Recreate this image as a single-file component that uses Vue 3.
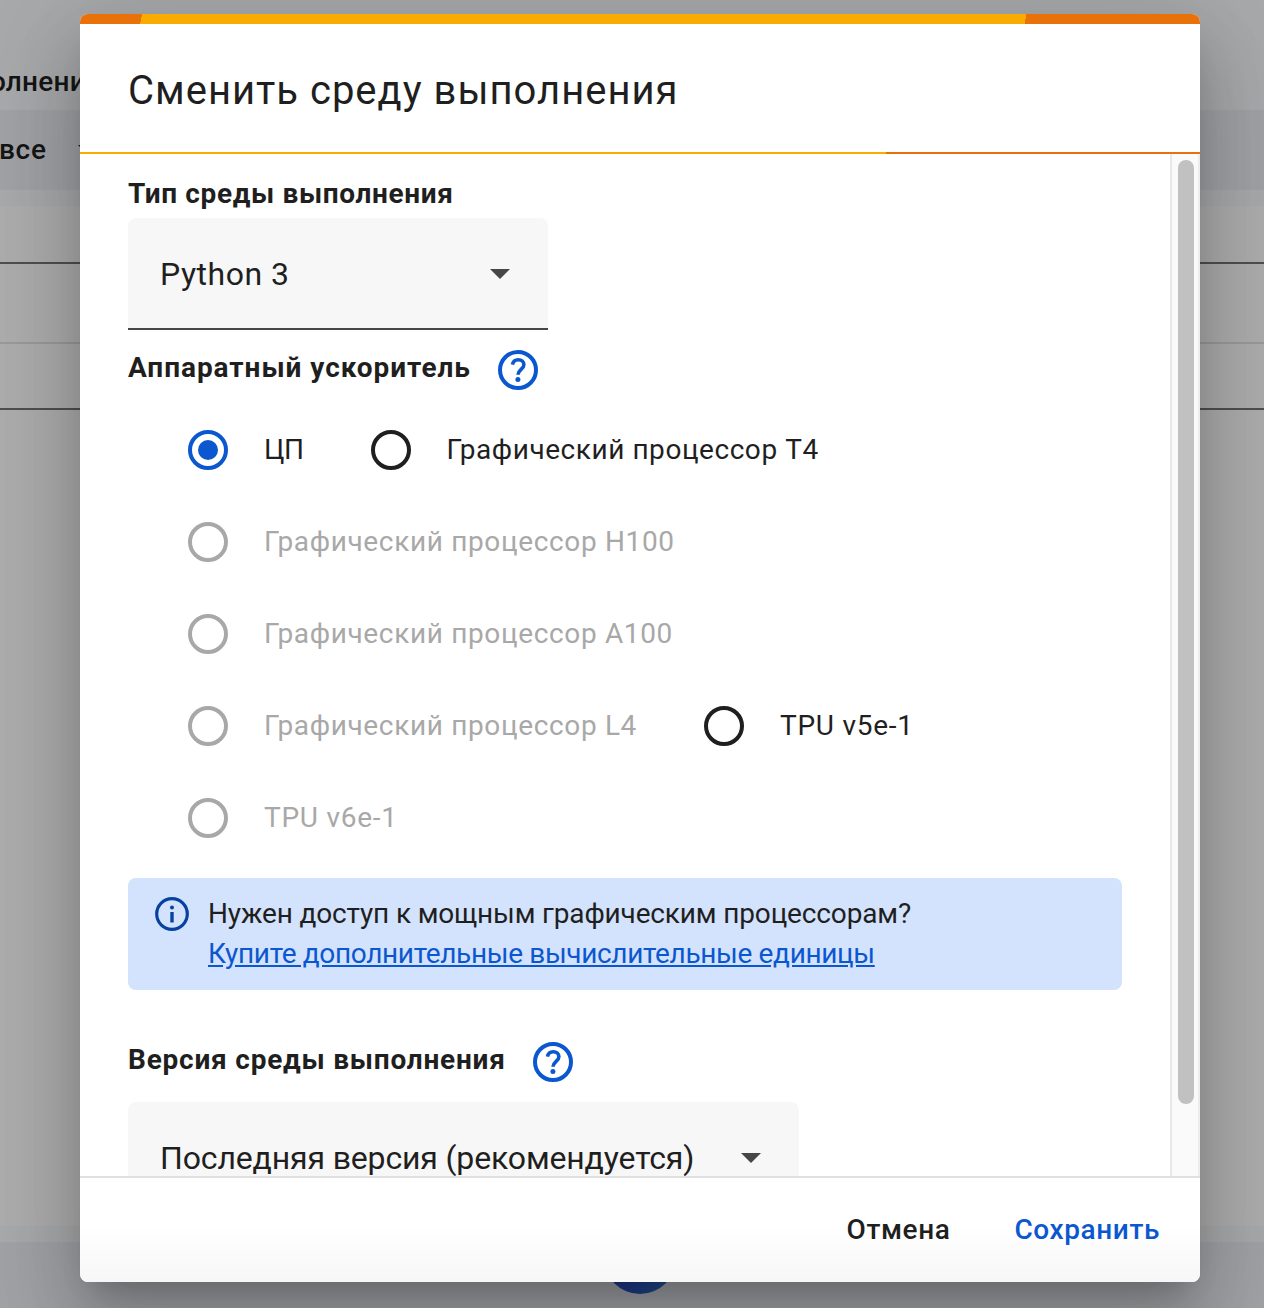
<!-- Change runtime type dialog -->
<template>
  <div class="screen">
    <!-- Notebook page under the scrim -->
    <div class="page">
      <div class="page-menu">
        <span class="page-text menu-text">олнение</span>
      </div>
      <div class="page-toolbar">
        <span class="page-text all-text">все</span>
        <svg class="page-caret" width="20" height="10" viewBox="0 0 20 10">
          <path d="M0 0h20L10 10z" fill="currentColor" />
        </svg>
      </div>
      <div class="page-gap"></div>
      <div class="page-cells">
        <div class="cell-space"></div>
        <div class="cell">
          <div class="cell-row first"></div>
          <div class="cell-row"></div>
        </div>
      </div>
      <div class="page-gap"></div>
      <div class="page-status"></div>
      <div class="page-fab"></div>
    </div>
    <div class="scrim"></div>

    <div class="dialog" role="dialog">
      <div class="progress-top"></div>
      <header class="dialog-header">
        <h2 class="dialog-title">Сменить среду выполнения</h2>
      </header>
      <div class="header-line"></div>

      <div class="dialog-body">
        <div class="body-content">
          <h3 class="label runtime-label">Тип среды выполнения</h3>
          <div class="select">
            <span class="select-python">Python 3</span>
            <svg class="select-arrow" width="20" height="10" viewBox="0 0 20 10">
              <path d="M0 0h20L10 10z" fill="currentColor" />
            </svg>
          </div>

          <div class="label-row hardware-row">
            <h3 class="label hardware-label">Аппаратный ускоритель</h3>
            <svg class="help-icon" viewBox="0 0 40 40">
              <circle cx="20" cy="20" r="18" fill="none" stroke="currentColor" stroke-width="4" />
              <path d="M14.4 14.6C15.1 11.5 17.2 9.7 20.2 9.7c3.3 0 5.7 2.1 5.7 5.1 0 4.3-5.9 5-5.9 10" fill="none" stroke="currentColor" stroke-width="3.6" />
              <circle cx="19.9" cy="29.5" r="2.5" fill="currentColor" />
            </svg>
          </div>

          <div class="options">
            <div v-for="(row, i) in rows" :key="i" class="option-row">
              <div
                v-for="item in row"
                :key="item.label"
                class="option"
                :class="{ checked: item.value === selected, disabled: item.disabled }"
                @click="select(item)"
              >
                <span class="radio"></span>
                <span class="option-text" :class="'text-' + item.value">{{ item.label }}</span>
              </div>
            </div>
          </div>

          <div class="notice">
            <svg class="info-icon" viewBox="0 0 34 34">
              <circle cx="17" cy="17" r="15.3" fill="none" stroke="currentColor" stroke-width="3.2" />
              <circle cx="17" cy="10.4" r="2" fill="currentColor" />
              <path d="M17 15v10.5" stroke="currentColor" stroke-width="3.4" />
            </svg>
            <div class="notice-text">
              <span class="notice-question">Нужен доступ к мощным графическим процессорам?</span><br />
              <a class="notice-link">Купите дополнительные вычислительные единицы</a>
            </div>
          </div>

          <div class="label-row version-row">
            <h3 class="label version-label">Версия среды выполнения</h3>
            <svg class="help-icon" viewBox="0 0 40 40">
              <circle cx="20" cy="20" r="18" fill="none" stroke="currentColor" stroke-width="4" />
              <path d="M14.4 14.6C15.1 11.5 17.2 9.7 20.2 9.7c3.3 0 5.7 2.1 5.7 5.1 0 4.3-5.9 5-5.9 10" fill="none" stroke="currentColor" stroke-width="3.6" />
              <circle cx="19.9" cy="29.5" r="2.5" fill="currentColor" />
            </svg>
          </div>
          <div class="select wide">
            <span class="select-version">Последняя версия (рекомендуется)</span>
            <svg class="select-arrow" width="20" height="10" viewBox="0 0 20 10">
              <path d="M0 0h20L10 10z" fill="currentColor" />
            </svg>
          </div>
        </div>
        <div class="scroll-track">
          <div class="scroll-thumb"></div>
        </div>
      </div>

      <footer class="dialog-footer">
        <button class="btn cancel">Отмена</button>
        <button class="btn save">Сохранить</button>
      </footer>
    </div>
  </div>
</template>

<script setup>
import { ref } from 'vue'

const selected = ref('cpu')

const rows = [
  [
    { value: 'cpu', label: 'ЦП' },
    { value: 't4', label: 'Графический процессор T4' }
  ],
  [{ value: 'h100', label: 'Графический процессор H100', disabled: true }],
  [{ value: 'a100', label: 'Графический процессор A100', disabled: true }],
  [
    { value: 'l4', label: 'Графический процессор L4', disabled: true },
    { value: 'v5e', label: 'TPU v5e-1' }
  ],
  [{ value: 'v6e', label: 'TPU v6e-1', disabled: true }]
]

const select = (item) => {
  if (!item.disabled) selected.value = item.value
}
</script>

<style>
body {
  overflow: hidden;
}
</style>

<style scoped>
.screen {
  position: relative;
  width: 1264px;
  height: 1308px;
  overflow: hidden;
  font-family: Roboto, "Noto Sans", sans-serif;
  font-size: 28px;
  color: #1f1f1f;
  white-space: nowrap;
}

/* Notebook page */
.page {
  display: flex;
  flex-direction: column;
  height: 100%;
}

.page-menu {
  height: 110px;
  flex: none;
  box-sizing: border-box;
  padding-top: 62px;
  background: #f8f9fb;
}

.page-text {
  font-weight: 500;
  line-height: 40px;
  letter-spacing: 0.2px;
}

.menu-text {
  display: block;
  margin-left: -10px;
}

.all-text {
  margin-left: -1px;
  letter-spacing: 0.7px;
}

.page-toolbar {
  display: flex;
  align-items: center;
  gap: 31px;
  height: 80px;
  flex: none;
  background: #edeff5;
}

.page-gap {
  height: 16px;
  flex: none;
  background: #f8f9fc;
}

.page-cells {
  flex: 1;
  background: #fff;
}

.cell-space {
  height: 56px;
}

.cell {
  border-top: 2px solid #747775;
  border-bottom: 2px solid #747775;
}

.cell-row {
  height: 64px;
}

.cell-row.first {
  height: 78px;
  border-bottom: 2px solid #e3e3e3;
}

.page-status {
  height: 66px;
  flex: none;
  background: #edeff5;
}

.page-fab {
  position: absolute;
  left: 604px;
  top: 1222px;
  width: 72px;
  height: 72px;
  border-radius: 50%;
  background: linear-gradient(90deg, #2f55cf 35%, #2f80d0);
}

.scrim {
  position: absolute;
  inset: 0;
  background: rgba(0, 0, 0, 0.32);
}

/* Dialog */
.dialog {
  position: absolute;
  left: 80px;
  top: 14px;
  width: 1120px;
  height: 1268px;
  display: flex;
  flex-direction: column;
  overflow: hidden;
  border-radius: 8px;
  background: #fff;
  box-shadow:
    0 22px 30px -14px rgba(0, 0, 0, 0.2),
    0 48px 76px 6px rgba(0, 0, 0, 0.14),
    0 18px 92px 16px rgba(0, 0, 0, 0.12);
}

.progress-top {
  height: 10px;
  flex: none;
  background: linear-gradient(100deg, #e8710a 61px, #f9ab00 61px, #f9ab00 932px, #e8710a 932px);
}

.dialog-header {
  display: flex;
  align-items: center;
  height: 128px;
  padding: 4px 48px 0;
  box-sizing: border-box;
  flex: none;
}

.dialog-title {
  margin: 0;
  font-size: 40px;
  font-weight: 450;
  letter-spacing: 1px;
}

.header-line {
  height: 2px;
  flex: none;
  background: linear-gradient(90deg, #f9ab00 806px, #e8710a 806px);
}

.dialog-body {
  display: flex;
  height: 1022px;
  flex: none;
  overflow: hidden;
}

.body-content {
  flex: 1;
  padding: 20px 48px 0;
}

.label {
  margin: 0;
  font-size: 28px;
  font-weight: 700;
  line-height: 40px;
}

.runtime-label {
  letter-spacing: 0.65px;
}

.select {
  display: flex;
  align-items: center;
  justify-content: space-between;
  box-sizing: border-box;
  width: 420px;
  height: 112px;
  margin-top: 4px;
  padding: 2px 38px 0 32px;
  border-bottom: 2px solid #444746;
  border-radius: 8px 8px 0 0;
  background: #f7f7f7;
  font-size: 32px;
}

.select-python {
  letter-spacing: 0.5px;
}

.select-version {
  letter-spacing: -0.15px;
}

.select-arrow {
  color: #444746;
}

.label-row {
  display: flex;
  align-items: center;
  gap: 27px;
}

.hardware-row {
  height: 40px;
  margin-top: 20px;
}

.hardware-label {
  margin-top: -4px;
  letter-spacing: 0.96px;
}

.help-icon {
  width: 40px;
  height: 40px;
  flex: none;
  color: #0b57d0;
}

.options {
  padding: 14px 0 0 60px;
}

.option-row {
  display: flex;
  align-items: center;
  gap: 68px;
  height: 92px;
}

.option {
  display: flex;
  align-items: center;
  gap: 36px;
}

.radio {
  display: flex;
  align-items: center;
  justify-content: center;
  box-sizing: border-box;
  width: 40px;
  height: 40px;
  border: 4px solid #1f1f1f;
  border-radius: 50%;
}

.option-text {
  margin-top: -2px;
  letter-spacing: 0.65px;
}

.text-cpu {
  letter-spacing: -0.5px;
}

.text-t4 {
  margin-left: -1px;
  letter-spacing: 0.55px;
}

.text-l4 {
  margin-right: -1px;
}

.text-v5e,
.text-v6e {
  letter-spacing: 0.75px;
}

.checked .radio {
  border-color: #0b57d0;
}

.checked .radio::after {
  content: '';
  width: 20px;
  height: 20px;
  border-radius: 50%;
  background: #0b57d0;
}

.disabled {
  color: #a8a8a8;
}

.disabled .radio {
  border-color: #a8a8a8;
}

.notice {
  display: flex;
  align-items: flex-start;
  gap: 19px;
  box-sizing: border-box;
  width: 994px;
  height: 112px;
  margin-top: 14px;
  padding: 16px 27px;
  border-radius: 8px;
  background: #d3e3fd;
}

.info-icon {
  width: 34px;
  height: 34px;
  margin-top: 3px;
  color: #0842a0;
}

.notice-text {
  line-height: 40px;
}

.notice-question {
  letter-spacing: -0.15px;
}

.notice-link {
  color: #0b57d0;
  letter-spacing: -0.34px;
  text-decoration: underline;
}

.version-row {
  height: 40px;
  margin-top: 52px;
}

.version-label {
  margin-top: -4px;
  letter-spacing: 0.78px;
}

.wide {
  width: 671px;
  margin-top: 20px;
}

/* Scrollbar */
.scroll-track {
  box-sizing: border-box;
  width: 30px;
  padding: 6px 4px 0 6px;
  border-left: 2px solid #e8e8e8;
  border-right: 2px solid #ededed;
  background: #fafafa;
}

.scroll-thumb {
  width: 16px;
  height: 944px;
  border-radius: 8px;
  background: #c1c1c1;
}

/* Footer */
.dialog-footer {
  display: flex;
  align-items: center;
  justify-content: flex-end;
  gap: 64px;
  flex: 1;
  padding: 0 40px 2px;
  border-top: 2px solid #e0e0e0;
  background: linear-gradient(#fff 45%, #f7f7f7);
}

.btn {
  padding: 0;
  border: none;
  background: none;
  font-family: inherit;
  font-size: 28px;
  font-weight: 500;
  letter-spacing: 0.6px;
  color: #1f1f1f;
}

.btn.save {
  color: #0b57d0;
}
</style>
